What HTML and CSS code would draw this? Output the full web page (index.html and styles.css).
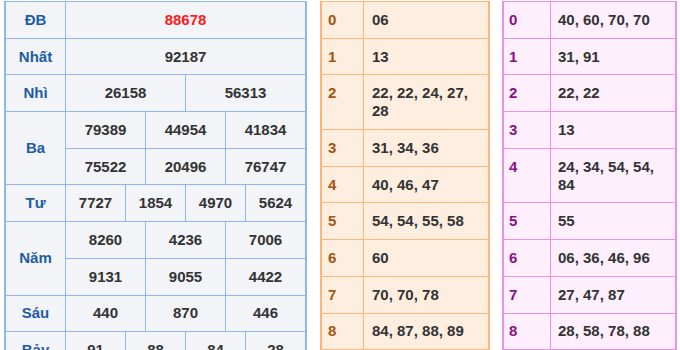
FILE: index.html
```html
<!DOCTYPE html>
<html lang="vi">
<head>
<meta charset="utf-8">
<title>Kết quả xổ số</title>
<link rel="stylesheet" href="styles.css">
</head>
<body>
<div class="page">
  <div class="kq">
    <div class="lbl">ĐB</div><div class="num red s12">88678</div>
    <div class="lbl">Nhất</div><div class="num s12">92187</div>
    <div class="lbl">Nhì</div><div class="num s6">26158</div><div class="num s6">56313</div>
    <div class="lbl r2">Ba</div>
    <div class="num s4">79389</div><div class="num s4">44954</div><div class="num s4">41834</div>
    <div class="num s4">75522</div><div class="num s4">20496</div><div class="num s4">76747</div>
    <div class="lbl">Tư</div>
    <div class="num s3">7727</div><div class="num s3">1854</div><div class="num s3">4970</div><div class="num s3">5624</div>
    <div class="lbl r2">Năm</div>
    <div class="num s4">8260</div><div class="num s4">4236</div><div class="num s4">7006</div>
    <div class="num s4">9131</div><div class="num s4">9055</div><div class="num s4">4422</div>
    <div class="lbl">Sáu</div>
    <div class="num s4">440</div><div class="num s4">870</div><div class="num s4">446</div>
    <div class="lbl">Bảy</div>
    <div class="num s3">91</div><div class="num s3">88</div><div class="num s3">84</div><div class="num s3">28</div>
  </div>

  <div class="loto dau">
    <div class="k">0</div><div class="v">06</div>
    <div class="k">1</div><div class="v">13</div>
    <div class="k">2</div><div class="v">22, 22, 24, 27, 28</div>
    <div class="k">3</div><div class="v">31, 34, 36</div>
    <div class="k">4</div><div class="v">40, 46, 47</div>
    <div class="k">5</div><div class="v">54, 54, 55, 58</div>
    <div class="k">6</div><div class="v">60</div>
    <div class="k">7</div><div class="v">70, 70, 78</div>
    <div class="k">8</div><div class="v">84, 87, 88, 89</div>
    <div class="k">9</div><div class="v">91</div>
  </div>

  <div class="loto duoi">
    <div class="k">0</div><div class="v">40, 60, 70, 70</div>
    <div class="k">1</div><div class="v">31, 91</div>
    <div class="k">2</div><div class="v">22, 22</div>
    <div class="k">3</div><div class="v">13</div>
    <div class="k">4</div><div class="v">24, 34, 54, 54, 84</div>
    <div class="k">5</div><div class="v">55</div>
    <div class="k">6</div><div class="v">06, 36, 46, 96</div>
    <div class="k">7</div><div class="v">27, 47, 87</div>
    <div class="k">8</div><div class="v">28, 58, 78, 88</div>
    <div class="k">9</div><div class="v">89</div>
  </div>
</div>
</body>
</html>
```

FILE: styles.css
```css
html, body {
  margin: 0;
  padding: 0;
  background: #ffffff;
  overflow: hidden;
}

body {
  font-family: "Liberation Sans", Arial, sans-serif;
  font-weight: bold;
  font-size: 15px;
  color: #333333;
}

.page {
  display: flex;
  align-items: flex-start;
  padding: 1px 0 0 4px;
}

/* Result table */
.kq {
  display: grid;
  grid-template-columns: 59px repeat(12, 19px);
  grid-auto-rows: 35.7px;
  gap: 1px;
  background: #8db6f2;
  border: solid #8db6f2;
  border-width: 1px 2px 0;
  flex: none;
}

.kq > div {
  background: #f3f4f8;
  display: flex;
  align-items: center;
  justify-content: center;
  line-height: 18px;
}

.lbl {
  color: #1d5ca5;
}

.r2 { grid-row: span 2; }
.s12 { grid-column: span 12; }
.s6 { grid-column: span 6; }
.s4 { grid-column: span 4; }
.s3 { grid-column: span 3; }

.red { color: #ff1a1a; }

/* Loto tables */
.loto {
  display: grid;
  gap: 1px;
  border-style: solid;
  border-width: 1px 2px 0;
  flex: none;
}

.loto > div {
  line-height: 18px;
  padding: 8.85px 7px 8.85px 8px;
}

.loto .k {
  padding-left: 6px;
}

.dau {
  margin-left: 13px;
  grid-template-columns: 41px 124px;
  background: #fdb678;
  border-color: #fdb678;
}

.dau > div { background: #fdeee0; }
.dau .k { color: #a3560f; }

.duoi {
  margin-left: 12px;
  grid-template-columns: 46px 124px;
  background: #ee90e8;
  border-color: #ee90e8;
}

.duoi > div { background: #fdeffb; }
.duoi .k { color: #8a108a; padding-left: 5px; }
.duoi .v { padding-left: 7px; }
```
